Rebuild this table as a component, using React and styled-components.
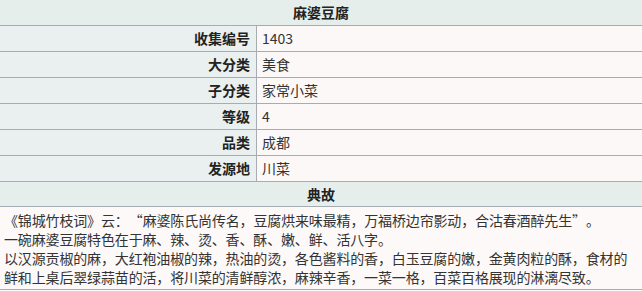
import React from "react";
import styled, { createGlobalStyle } from "styled-components";

const Global = createGlobalStyle`
  html, body { margin: 0; padding: 0; background: #fdfafa; }
  body { font-family: "Microsoft YaHei", "Noto Sans CJK SC", "Noto Sans", sans-serif; }
`;

const Table = styled.div`
  width: 642px;
  display: flex;
  flex-direction: column;
  color: #222;
  font-size: 14px;
  background: #fcf8f7;
`;

const Title = styled.div`
  height: ${(p) => p.$h || 25}px;
  line-height: ${(p) => p.$h || 25}px;
  text-align: center;
  font-weight: bold;
  background: #e6eeec;
  border-bottom: 1px solid #a7acb3;
  color: #222;
`;

const Row = styled.div`
  display: grid;
  grid-template-columns: 257px 1fr;
  height: 25px;
  border-bottom: 1px solid #a7acb3;
`;

const Label = styled.div`
  background: #e9f0ef;
  border-right: 1px solid #a7acb3;
  text-align: right;
  padding-right: 6px;
  font-weight: bold;
  line-height: 25px;
  color: #222;
`;

const Value = styled.div`
  background: #fcf8f7;
  padding-left: 5px;
  line-height: 25px;
  color: #333;
`;

const Story = styled.div`
  padding: 4px 4px 2px 4px;
  line-height: 19px;
  height: 76px;
  color: #333;
  background: #fcf9f8;
  border-bottom: 1px solid #a7acb3;
  white-space: nowrap;
  letter-spacing: -0.15px;
  text-spacing-trim: space-all;
`;

const Quote = styled.span`
  display: inline-block;
  width: 14px;
  text-align: ${(p) => (p.$open ? "right" : "left")};
`;

const rows = [
  ["收集编号", "1403"],
  ["大分类", "美食"],
  ["子分类", "家常小菜"],
  ["等级", "4"],
  ["品类", "成都"],
  ["发源地", "川菜"],
];

const lines = [
  "一碗麻婆豆腐特色在于麻、辣、烫、香、酥、嫩、鲜、活八字。",
  "以汉源贡椒的麻，大红袍油椒的辣，热油的烫，各色酱料的香，白玉豆腐的嫩，金黄肉粒的酥，食材的",
  "鲜和上桌后翠绿蒜苗的活，将川菜的清鲜醇浓，麻辣辛香，一菜一格，百菜百格展现的淋漓尽致。",
];

export default function App() {
  return (
    <>
      <Global />
      <Table>
        <Title>麻婆豆腐</Title>
        {rows.map(([k, v]) => (
          <Row key={k}>
            <Label>{k}</Label>
            <Value>{v}</Value>
          </Row>
        ))}
        <Title $h={24}>典故</Title>
        <Story>
          <div>
            《锦城竹枝词》云：<Quote $open>“</Quote>麻婆陈氏尚传名，豆腐烘来味最精，万福桥边帘影动，合沽春酒醉先生<Quote>”</Quote>。
          </div>
          {lines.map((l) => (
            <div key={l}>{l}</div>
          ))}
        </Story>
      </Table>
    </>
  );
}
